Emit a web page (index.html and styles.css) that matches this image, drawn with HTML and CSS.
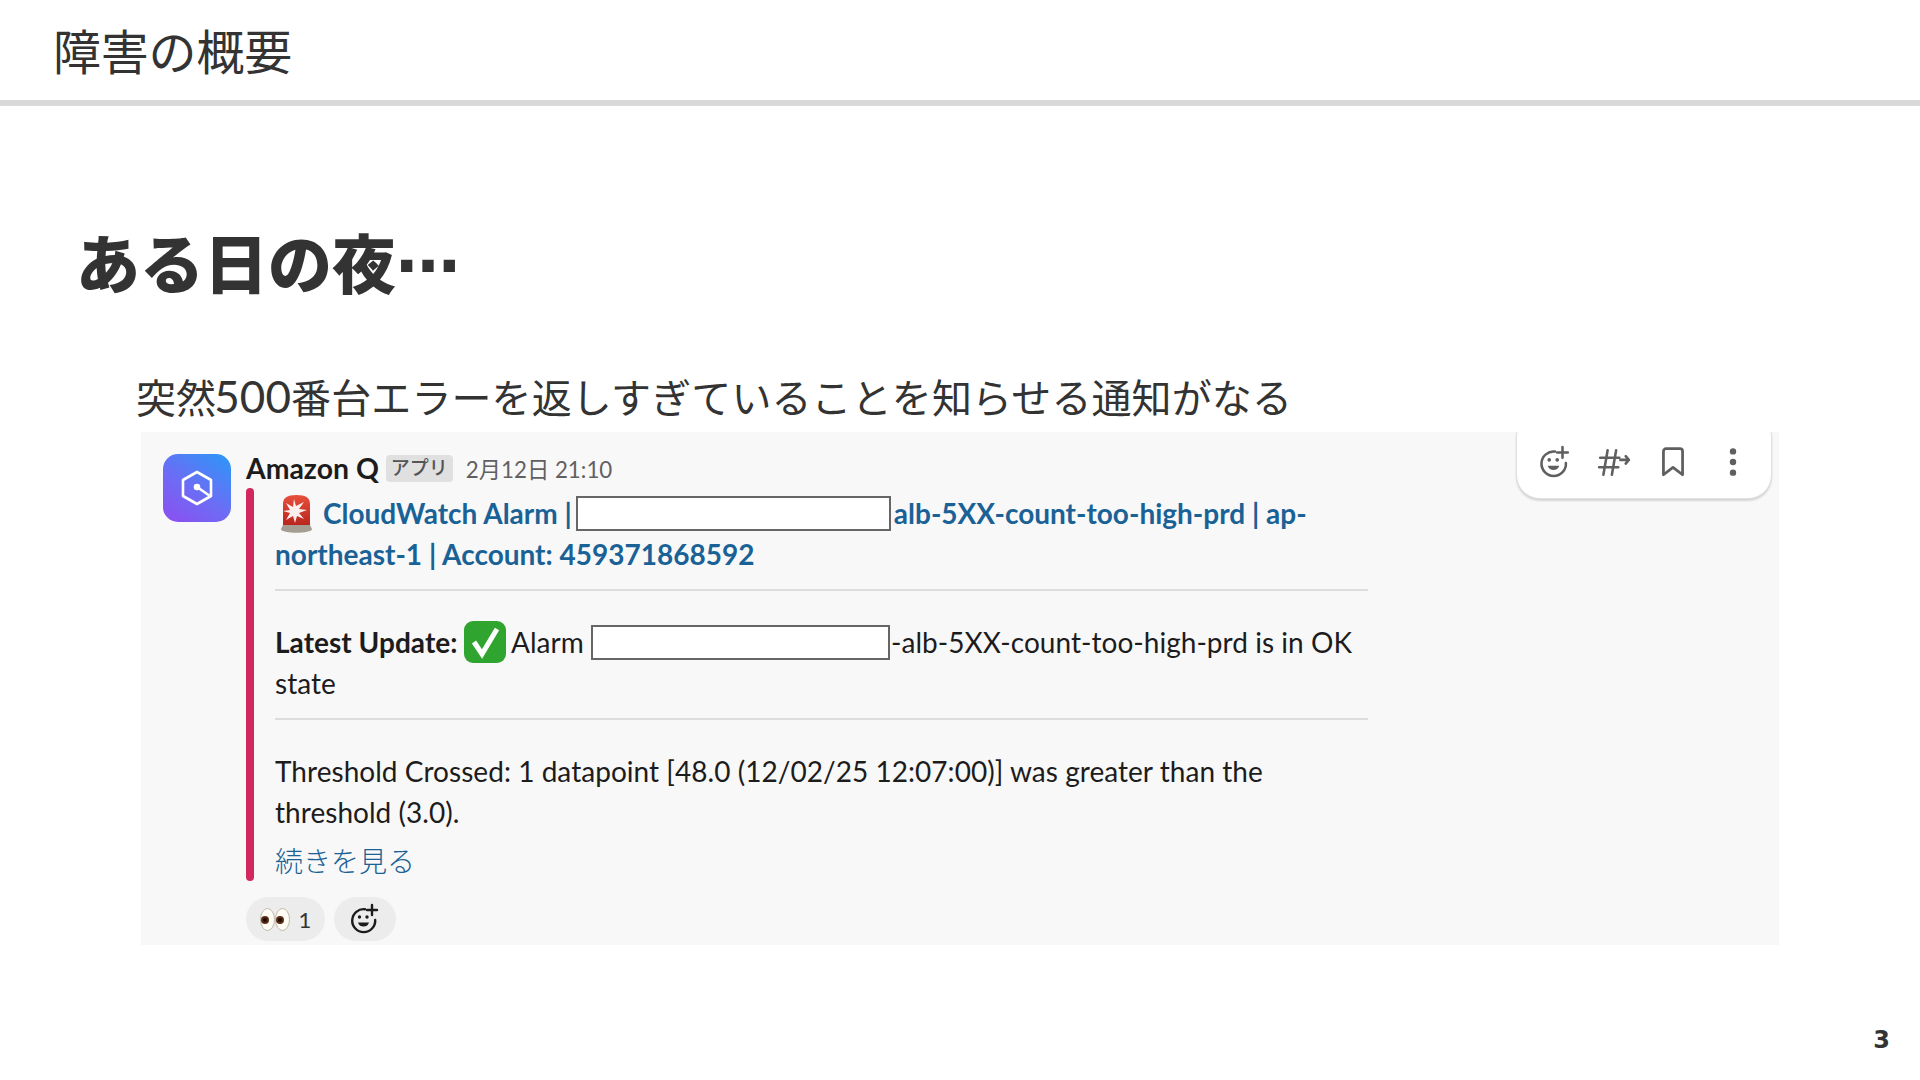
FILE: index.html
```html
<!DOCTYPE html>
<html lang="ja">
<head>
<meta charset="utf-8">
<title>障害の概要</title>
<link rel="stylesheet" href="styles.css">
</head>
<body>
<div class="slide">
  <header class="head"><h1 class="head-title">障害の概要</h1></header>
  <main class="main">
    <h2 class="heading">ある日の夜<span class="dots">…</span></h2>
    <p class="lead">突然<span class="lead-num">500</span>番台エラーを返しすぎていることを知らせる通知がなる</p>
    <section class="shot">
      <div class="toolbar">
        <svg class="tool" viewBox="0 0 32 32" fill="none" stroke="#5f5f5f" stroke-width="2.4" stroke-linecap="round"><path d="M17 6.200A11.500 11.500 0 1 0 27.200 17"/><path d="M24 2v10M19 7h10"/><circle cx="11.500" cy="14" r="1.700" fill="#5f5f5f" stroke="none"/><circle cx="19" cy="14" r="1.700" fill="#5f5f5f" stroke="none"/><path d="M10 19.500h11c-1 3-3 4-5.500 4s-4.500-1-5.500-4z" fill="#5f5f5f" stroke="none"/></svg>
        <svg class="tool" viewBox="0 0 32 32" fill="none" stroke="#5f5f5f" stroke-width="2.400" stroke-linecap="round" stroke-linejoin="round"><path d="M10 5 6 28M18 5l-4 23M3 12h18M2 21h18"/><path d="M22 14h8M27 10.500l3 3.500-3 3.500"/></svg>
        <svg class="tool" viewBox="0 0 32 32" fill="none" stroke="#5f5f5f" stroke-width="2.600" stroke-linejoin="round"><path d="M7 6A2.500 2.500 0 0 1 9.500 3.500h13A2.500 2.500 0 0 1 25 6v22l-9-7-9 7z"/></svg>
        <svg class="tool" viewBox="0 0 32 32" fill="#5f5f5f"><circle cx="16" cy="6" r="3"/><circle cx="16" cy="16" r="3"/><circle cx="16" cy="26" r="3"/></svg>
      </div>
      <div class="avatar">
        <svg class="avatar-mark" viewBox="0 0 32 36" fill="none" stroke="#fff" stroke-width="2.600" stroke-linejoin="round" stroke-linecap="round"><path d="M16 2 30 10v16l-14 8-14-8V10z"/><path d="M16 17l13 9"/><circle cx="16" cy="17" r="2" fill="#fff"/></svg>
      </div>
      <div class="message">
        <div class="meta">
          <span class="name">Amazon Q</span>
          <span class="badge">アプリ</span>
          <span class="time">2月12日 21:10</span>
        </div>
        <div class="attachment">
          <div class="bar"></div>
          <div class="att-body">
            <p class="alert">
              <svg class="emoji siren" viewBox="0 0 31 38"><defs><linearGradient id="dome" x1="0" y1="0" x2="0" y2="1"><stop offset="0" stop-color="#e8503c"/><stop offset="1" stop-color="#b8241c"/></linearGradient></defs><path d="M2 9c0-6 4-9 13.500-9S29 3 29 9v22H2z" fill="url(#dome)"/><path d="M13 4l2 7 8-4-5 7 8 1-8 3 5 6-7-3-2 7-2-7-7 4 4-7-7-2 7-1-4-7 7 4z" fill="#fff" opacity=".92"/><path d="M2 30h27l2 4c0 5-31 5-31 0z" fill="#a39d92"/></svg><a class="link">CloudWatch Alarm |</a><span class="redact redact-a"></span><a class="link">alb-5XX-count-too-high-prd | ap-northeast-1 | Account: 459371868592</a>
            </p>
            <hr class="rule">
            <p class="para">
              <b class="strong">Latest Update:</b> <svg class="emoji check" viewBox="0 0 42 42"><rect width="42" height="42" rx="9" fill="#2fa52f"/><path d="M10 21l8 12L33 8" fill="none" stroke="#fff" stroke-width="5"/></svg> Alarm <span class="redact redact-b"></span>-alb-5XX-count-too-high-prd is in OK state
            </p>
            <hr class="rule">
            <p class="para">Threshold Crossed: 1 datapoint [48.0 (12/02/25 12:07:00)] was greater than the threshold (3.0).</p>
            <p class="more">続きを見る</p>
          </div>
        </div>
        <div class="reactions">
          <span class="pill pill-eyes">
            <svg class="eyes" viewBox="0 0 30 23"><ellipse cx="7.500" cy="11.500" rx="7" ry="11" fill="#fffdf4" stroke="#bdb8ab"/><ellipse cx="22.500" cy="11.500" rx="7" ry="11" fill="#fffdf4" stroke="#bdb8ab"/><circle cx="5" cy="12" r="4" fill="#5a2c12"/><circle cx="20" cy="12" r="4" fill="#5a2c12"/><circle cx="5" cy="12" r="2" fill="#1a0d06"/><circle cx="20" cy="12" r="2" fill="#1a0d06"/></svg>
            <span class="count">1</span>
          </span>
          <span class="pill pill-add">
            <svg class="add" viewBox="0 0 32 32" fill="none" stroke="#1d1c1d" stroke-width="2.400" stroke-linecap="round"><path d="M17 6.200A11.500 11.500 0 1 0 27.200 17"/><path d="M24 2v10M19 7h10"/><circle cx="11.500" cy="14" r="1.700" fill="#1d1c1d" stroke="none"/><circle cx="19" cy="14" r="1.700" fill="#1d1c1d" stroke="none"/><path d="M10 19.500h11c-1 3-3 4-5.500 4s-4.500-1-5.500-4z" fill="#1d1c1d" stroke="none"/></svg>
          </span>
        </div>
      </div>
    </section>
  </main>
  <div class="page-num">3</div>
</div>
</body>
</html>
```

FILE: styles.css
```css
* { box-sizing: border-box; }
html, body { margin: 0; padding: 0; background: #fff; }
body { font-family: "Noto Sans CJK JP", "Noto Sans", sans-serif; color: #333; }
.slide { position: relative; width: 1920px; height: 1080px; overflow: hidden; }
.head { height: 106px; border-bottom: 6px solid #d9d9d9; padding: 0 0 0 53px; }
.head-title { margin: 0; font-size: 48px; font-weight: 400; letter-spacing: -.2px; line-height: 98px; color: #333; }
.main { display: flex; flex-direction: column; }
.heading { margin: 110px 0 0 76px; font-size: 64px; font-weight: 900; line-height: 88px; color: #333; }
.dots { font-family: "DejaVu Sans", sans-serif; font-weight: 700; line-height: 0; vertical-align: 16px; }
.lead { margin: 64px 0 0 136px; font-size: 40px; font-weight: 400; letter-spacing: .1px; line-height: 56px; color: #333; }
.lead-num { margin-left: -2px; font-family: Lato, sans-serif; font-size: 44px; line-height: 0; }
.shot { position: relative; display: flex; align-items: flex-start; gap: 15px; width: 1638px; height: 513px; margin: 8px 0 0 141px; padding: 22px 0 0 22px; background: #f8f8f8; overflow: hidden; font-family: Lato, "Noto Sans CJK JP", sans-serif; color: #1d1c1d; }
.toolbar { position: absolute; top: -20px; right: 7px; display: flex; align-items: center; justify-content: space-between; width: 256px; height: 87px; padding: 12px 21px 0 20px; background: #fff; border-radius: 24px; border: 1px solid #e0e0e0; box-shadow: 0 2px 2px rgba(0,0,0,.14); }
.tool { width: 34px; height: 34px; }
.avatar { display: flex; align-items: center; justify-content: center; flex: none; width: 68px; height: 68px; border-radius: 15px; background: linear-gradient(35deg, #8e4df0 0%, #6d6cf5 45%, #2a98f8 100%); }
.avatar-mark { width: 32px; height: 36px; }
.message { width: 1150px; }
.meta { display: flex; align-items: center; height: 34px; margin-top: -3px; }
.name { font-size: 28.4px; font-weight: 700; color: #1d1c1d; }
.badge { margin-left: 7px; padding: 0 5px; height: 27px; line-height: 24px; border-radius: 4px; background: #e0e0e0; color: #555; font-family: "Noto Sans CJK JP", sans-serif; font-size: 19px; font-weight: 500; }
.time { margin-left: 13px; font-size: 22.3px; color: #616061; }
.attachment { display: flex; gap: 21px; margin-top: 3px; }
.bar { flex: none; width: 8px; border-radius: 4px; background: #d2275f; }
.att-body { width: 1093px; }
.alert { margin: 5px 0 0; font-size: 28px; font-weight: 700; line-height: 41px; color: #1264a3; }
.link { color: #1a6296; }
.para { margin: 0; font-size: 28px; letter-spacing: .04px; line-height: 41px; color: #1d1c1d; }
.strong { font-weight: 700; }
.rule { height: 2px; margin: 14px 0 31px; border: 0; background: #ddd; }
.emoji { vertical-align: middle; }
.siren { width: 31px; height: 38px; margin: -10px 11px -4px 6px; }
.check { width: 42px; height: 42px; margin: -11px -1px -3px -1px; }
.redact { display: inline-block; height: 35px; vertical-align: -7px; background: #fff; border: 2px solid #666; }
.redact-a { width: 315px; margin: 0 3px 0 4px; }
.redact-b { width: 299px; margin-right: 1px; }
.more { margin: 7px 0 0; font-size: 28px; line-height: 41px; color: #1a6296; font-family: "Noto Sans CJK JP", sans-serif; font-weight: 300; }
.reactions { display: flex; gap: 9px; margin-top: 16px; }
.pill { display: flex; align-items: center; justify-content: center; height: 44px; border-radius: 22px; background: #ececec; }
.pill-eyes { width: 79px; gap: 9px; }
.pill-add { width: 62px; padding-right: 2px; }
.eyes { width: 30px; height: 23px; }
.add { width: 32px; height: 32px; }
.count { font-size: 22px; color: #333; }
.page-num { position: absolute; right: 30px; top: 1024px; font-family: "DejaVu Sans", sans-serif; font-size: 24px; font-weight: 700; color: #333; line-height: 32px; }
```
